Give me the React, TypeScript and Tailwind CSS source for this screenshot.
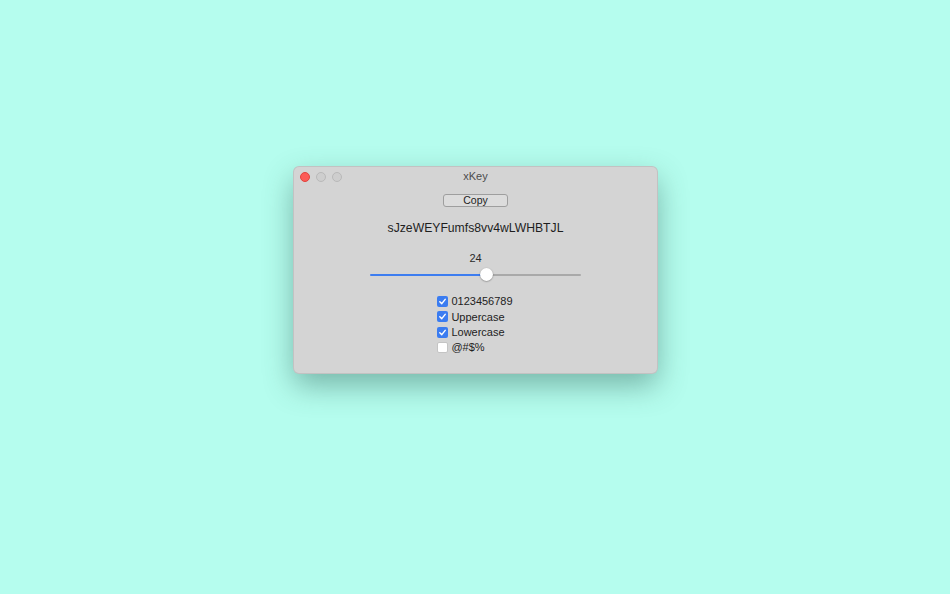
import { useState } from "react";

const options = [
    { label: "0123456789", checked: true },
    { label: "Uppercase", checked: true },
    { label: "Lowercase", checked: true },
    { label: "@#$%", checked: false },
];

function CheckBox({ checked }: { checked: boolean }) {
    return checked ? (
        <span className="flex h-[11px] w-[11px] items-center justify-center rounded-[2px] bg-[#3a7cf1]">
            <svg width="9" height="9" viewBox="0 0 10 10">
                <path d="M2 5.2 L4.2 7.4 L8 2.6" fill="none" stroke="white" strokeWidth="1.6" strokeLinecap="round" strokeLinejoin="round" />
            </svg>
        </span>
    ) : (
        <span className="h-[11px] w-[11px] rounded-[2px] border border-[#c4c4c4] bg-white" />
    );
}

export default function App() {
    const [length] = useState(24);

    return (
        <div
            className="h-[594px] w-full bg-[#b5fdee] pl-[294px] pt-[167px]"
            style={{ fontFamily: "'Liberation Sans', Arial, sans-serif" }}
        >
            <div className="flex h-[206px] w-[363px] flex-col rounded-[5px] bg-[#d4d4d4] shadow-[0_12px_30px_rgba(40,90,80,0.45)] ring-1 ring-[#c2c2c2]">
                {/* title bar */}
                <div className="relative flex h-[18px] items-center pl-[6px] pt-[1px]">
                    <div className="flex gap-[6px]">
                        <span className="h-[10px] w-[10px] rounded-full border-[0.5px] border-[#e0443e] bg-[#fc5b57]" />
                        <span className="h-[10px] w-[10px] rounded-full border-[0.5px] border-[#b9b9b9] bg-[#cecece]" />
                        <span className="h-[10px] w-[10px] rounded-full border-[0.5px] border-[#b9b9b9] bg-[#cecece]" />
                    </div>
                    <span className="absolute inset-x-0 text-center text-[11px] text-[#4d4d4d]">xKey</span>
                </div>

                <div className="flex flex-col items-center">
                    <button className="mt-[9px] h-[13px] w-[65px] rounded-[3px] border border-[#9e9e9e] bg-[#dcdcdc] text-[10.5px] leading-[11px] text-[#222]">
                        Copy
                    </button>
                    <div className="mt-[14px] text-[12.2px] leading-[15px] text-[#1e1e1e]">sJzeWEYFumfs8vv4wLWHBTJL</div>
                    <div className="mt-[16px] text-[11px] leading-[13px] text-[#2a2a2a]">{length}</div>
                    <div className="relative mt-[3px] flex h-[13px] w-[211px] items-center">
                        <div className="h-[2px] w-[116px] rounded-l bg-[#3d7df0]" />
                        <div className="h-[2px] flex-1 rounded-r bg-[#a9a9a9]" />
                        <span className="absolute left-[110px] top-0 h-[13px] w-[13px] rounded-full bg-white shadow-[0_0.5px_1.5px_rgba(0,0,0,0.45)]" />
                    </div>
                    <div className="mt-[15px] flex flex-col gap-[4px] pr-[1px]">
                        {options.map((o) => (
                            <label key={o.label} className="flex h-[11.3px] items-center gap-[3px] text-[11px] text-[#222]">
                                <CheckBox checked={o.checked} />
                                <span>{o.label}</span>
                            </label>
                        ))}
                    </div>
                </div>
            </div>
        </div>
    );
}
